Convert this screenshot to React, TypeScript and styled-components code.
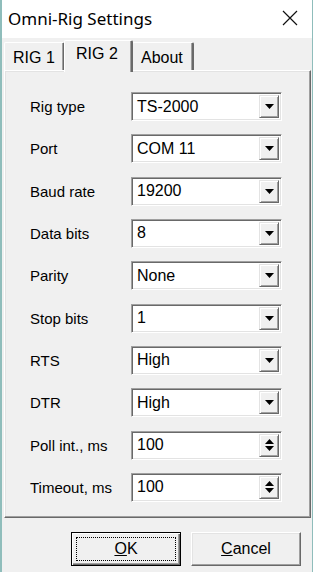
import React from "react";
import styled, { createGlobalStyle } from "styled-components";

const GlobalStyle = createGlobalStyle`
  html, body {
    margin: 0;
    padding: 0;
    background: #f0f0f0;
  }
  * {
    box-sizing: border-box;
  }
`;

const Window = styled.div`
  width: 313px;
  height: 572px;
  display: flex;
  flex-direction: column;
  background: #f0f0f0;
  border-left: 2px solid #8fbdbb;
  border-right: 1px solid #8fbdbb;
  font-family: "Liberation Sans", Arial, sans-serif;
  color: #000;
  overflow: hidden;
`;

const TitleBar = styled.div`
  height: 38px;
  flex: none;
  display: flex;
  align-items: center;
  justify-content: space-between;
  background: #fff;
  padding: 0 14px 2px 6px;
`;

const Title = styled.div`
  font-family: "Noto Sans", "Open Sans", sans-serif;
  font-size: 17px;
  color: #000;
`;

const CloseIcon = () => (
  <svg width="16" height="16" viewBox="0 0 16 16">
    <path d="M1 1 L15 15 M15 1 L1 15" stroke="#111" strokeWidth="1.2" fill="none" />
  </svg>
);

const Body = styled.div`
  flex: 1;
  display: flex;
  flex-direction: column;
  padding: 2px 1px 0 2px;
`;

const TabStrip = styled.div`
  height: 30px;
  display: flex;
  align-items: flex-end;
  position: relative;
  z-index: 1;
`;

const Tab = styled.div<{ $selected?: boolean; $w: number }>`
  width: ${({ $w }) => $w}px;
  height: ${({ $selected }) => ($selected ? 32 : 28)}px;
  margin-bottom: ${({ $selected }) => ($selected ? -2 : 0)}px;
  margin-left: ${({ $selected }) => ($selected ? -1 : 0)}px;
  margin-right: ${({ $selected }) => ($selected ? -1 : 0)}px;
  background: #f0f0f0;
  border-top: 1px solid #fff;
  border-left: 1px solid #fff;
  border-right: 2px solid #696969;
  box-shadow: inset -1px 0 0 #a0a0a0;
  border-radius: 2px 2px 0 0;
  font-size: 16px;
  padding: ${({ $selected }) => ($selected ? "4px 0 0 11px" : "6px 0 0 8px")};
  position: relative;
  z-index: ${({ $selected }) => ($selected ? 2 : 1)};
`;

const Panel = styled.div`
  height: 448px;
  border-top: 1px solid #fff;
  border-left: 1px solid #fff;
  border-right: 1px solid #696969;
  border-bottom: 1px solid #696969;
  box-shadow: inset -1px -1px 0 #a0a0a0, inset 1px 1px 0 #e3e3e3;
  padding: 21px 0 0 25px;
`;

const Form = styled.div`
  display: grid;
  grid-template-columns: 101px 151px;
  grid-auto-rows: 29px;
  row-gap: 13.33px;
`;

const Label = styled.div`
  display: flex;
  align-items: center;
  font-size: 15px;
`;

const Field = styled.div`
  display: flex;
  align-items: stretch;
  background: #fff;
  border-top: 1px solid #a0a0a0;
  border-left: 1px solid #a0a0a0;
  border-right: 1px solid #fff;
  border-bottom: 1px solid #fff;
  box-shadow: inset 1px 1px 0 #696969, inset -1px -1px 0 #e3e3e3;
  padding: 2px;
`;

const Value = styled.div`
  flex: 1;
  display: flex;
  align-items: center;
  padding-left: 3px;
  font-size: 16px;
`;

const SideButton = styled.div`
  width: 20px;
  display: flex;
  flex-direction: column;
  align-items: center;
  justify-content: center;
  gap: 2px;
  background: #f0f0f0;
  border-top: 1px solid #e3e3e3;
  border-left: 1px solid #e3e3e3;
  border-right: 1px solid #696969;
  border-bottom: 1px solid #696969;
  box-shadow: inset 1px 1px 0 #fff, inset -1px -1px 0 #a0a0a0;
`;

const Arrow = ({ up }: { up?: boolean }) => (
  <svg width="9" height="5" viewBox="0 0 9 5">
    <path d={up ? "M0 5 L9 5 L4.5 0 Z" : "M0 0 L9 0 L4.5 5 Z"} fill="#000" />
  </svg>
);

const Footer = styled.div`
  flex: 1;
  display: flex;
  justify-content: flex-end;
  gap: 10px;
  padding: 14px 10px 0 0;
`;

const Button = styled.div<{ $default?: boolean }>`
  width: 110px;
  height: 34px;
  display: flex;
  align-items: center;
  justify-content: center;
  font-size: 16px;
  background: #f0f0f0;
  position: relative;
  border-top: 1px solid ${({ $default }) => ($default ? "#000" : "#fff")};
  border-left: 1px solid ${({ $default }) => ($default ? "#000" : "#fff")};
  border-right: 1px solid ${({ $default }) => ($default ? "#000" : "#696969")};
  border-bottom: 1px solid ${({ $default }) => ($default ? "#000" : "#696969")};
  box-shadow: ${({ $default }) =>
    $default
      ? "inset 1px 1px 0 #fff, inset -1px -1px 0 #696969, inset -2px -2px 0 #a0a0a0"
      : "inset -1px -1px 0 #a0a0a0, inset 1px 1px 0 #e3e3e3"};
`;

const FocusRing = styled.div`
  position: absolute;
  inset: 4px;
  border: 1px dotted #000;
`;

const Mnemonic = styled.span`
  text-decoration: underline;
`;

type Row = { label: string; value: string; spin?: boolean };

const rows: Row[] = [
  { label: "Rig type", value: "TS-2000" },
  { label: "Port", value: "COM 11" },
  { label: "Baud rate", value: "19200" },
  { label: "Data bits", value: "8" },
  { label: "Parity", value: "None" },
  { label: "Stop bits", value: "1" },
  { label: "RTS", value: "High" },
  { label: "DTR", value: "High" },
  { label: "Poll int., ms", value: "100", spin: true },
  { label: "Timeout, ms", value: "100", spin: true },
];

const App = () => {
  return (
    <>
      <GlobalStyle />
      <Window>
        <TitleBar>
          <Title>Omni-Rig Settings</Title>
          <CloseIcon />
        </TitleBar>
        <Body>
          <TabStrip>
            <Tab $w={61}>RIG 1</Tab>
            <Tab $w={69} $selected>RIG 2</Tab>
            <Tab $w={62}>About</Tab>
          </TabStrip>
          <Panel>
            <Form>
              {rows.map((row) => (
                <React.Fragment key={row.label}>
                  <Label>{row.label}</Label>
                  <Field>
                    <Value>{row.value}</Value>
                    <SideButton>
                      {row.spin ? (
                        <>
                          <Arrow up />
                          <Arrow />
                        </>
                      ) : (
                        <Arrow />
                      )}
                    </SideButton>
                  </Field>
                </React.Fragment>
              ))}
            </Form>
          </Panel>
          <Footer>
            <Button $default>
              <FocusRing />
              <Mnemonic>O</Mnemonic>K
            </Button>
            <Button>
              <span>
                <Mnemonic>C</Mnemonic>ancel
              </span>
            </Button>
          </Footer>
        </Body>
      </Window>
    </>
  );
};

export default App;
